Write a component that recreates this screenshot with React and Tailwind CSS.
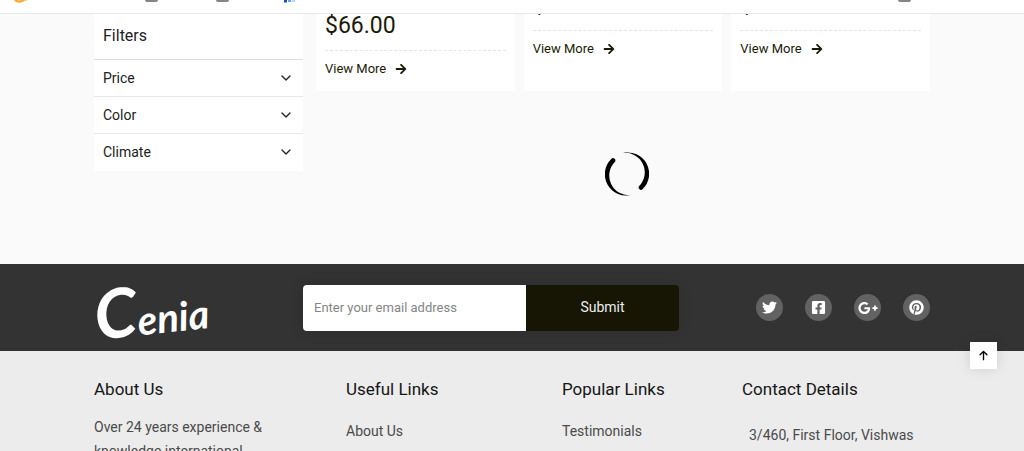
import { FaArrowRight, FaTwitter, FaFacebookSquare, FaPinterest } from "react-icons/fa";
import { FaArrowUp, FaGooglePlusG } from "react-icons/fa6";
import { FiChevronDown } from "react-icons/fi";

const filters = ["Price", "Color", "Climate"];

const products = [
  { price: "$66.00", pad: "pb-3" },
  { price: "$56.00", pad: "pb-8" },
  { price: "$44.00", pad: "pb-8" },
];

const socials = [
  { name: "Twitter", Icon: FaTwitter },
  { name: "Facebook", Icon: FaFacebookSquare },
  { name: "Google Plus", Icon: FaGooglePlusG },
  { name: "Pinterest", Icon: FaPinterest },
];

function Folder() {
  return <span className="h-[2px] w-[13px] rounded-b-xs bg-[#858585]" />;
}

function BookmarksBar() {
  return (
    <header className="relative z-10 flex h-[14px] items-start border-b border-[#e8e8e8] bg-white">
      <div className="flex flex-1 items-start">
        <svg className="ml-[14px] h-[3px] w-[13px]" viewBox="0 0 13 3">
          <path d="M1 0Q5 3 10 0" fill="none" stroke="#f9ab35" strokeWidth="2.5" />
          <path d="M10 0h3v1h-3z" fill="#fbc987" />
        </svg>
        <div className="ml-[118px] flex gap-[58px]">
          <Folder />
          <Folder />
        </div>
        <svg className="ml-[55px] h-[3px] w-[11px]" viewBox="0 0 11 3">
          <path d="M0 0h3v2.5H0z" fill="#1a4fc0" />
          <path d="M4 0h3v2H4z" fill="#6aa5ee" />
          <path d="M8 0h3v2H8z" fill="#b9d6f8" />
        </svg>
      </div>
      <div className="mr-[113px] flex">
        <Folder />
      </div>
    </header>
  );
}

function Filters() {
  return (
    <aside className="w-[209px] shrink-0 self-start bg-white text-sm text-[#222]">
      <h2 className="flex h-[46px] items-center border-b border-[#dcdcdc] px-[9px] pb-0.5 text-base">Filters</h2>
      {filters.map((name) => (
        <button
          key={name}
          type="button"
          className="flex h-[37px] w-full items-center justify-between border-b border-[#e8e8e8] px-[9px] pb-px last:border-transparent"
        >
          {name}
          <FiChevronDown className="size-4" />
        </button>
      ))}
    </aside>
  );
}

function ProductCard({ price, pad }) {
  return (
    <article className={`flex flex-1 flex-col justify-end bg-white px-[9px] ${pad}`}>
      <p className="text-[23px] leading-6 text-[#1c1b08]">{price}</p>
      <a href="#product" className="mt-3 flex items-center gap-[9px] border-t border-dashed border-[#e4e4e4] pt-2 text-[13px] leading-5 text-[#1c1b08]">
        View More
        <FaArrowRight className="size-3" />
      </a>
    </article>
  );
}

function Spinner() {
  return (
    <svg className="size-11" viewBox="0 0 44 44" role="img" aria-label="Loading">
      <path d="M6.3 7A21.3 21.3 0 0 0 26 43A19.5 19.5 0 0 1 9.8 10A2.3 2.3 0 0 0 6.3 7Z" />
      <path d="M6.3 7A21.3 21.3 0 0 0 26 43A19.5 19.5 0 0 1 9.8 10A2.3 2.3 0 0 0 6.3 7Z" transform="rotate(180 22 22)" />
    </svg>
  );
}

function FooterColumn({ title, width, children }) {
  return (
    <section className={width}>
      <h3 className="text-[17px] leading-6 text-[#151515]">{title}</h3>
      {children}
    </section>
  );
}

export default function App() {
  return (
    <div className="h-screen overflow-hidden bg-[#fafafa] font-['Roboto',sans-serif]">
      <BookmarksBar />
      <main className="mx-auto flex h-[250px] max-w-[836px] gap-[13px]">
        <Filters />
        <div className="flex min-w-0 flex-1 flex-col">
          <div className="flex h-[77px] gap-[9px]">
            {products.map((product) => (
              <ProductCard key={product.price} {...product} />
            ))}
          </div>
          <div className="mt-[61px] flex justify-center pl-2">
            <Spinner />
          </div>
        </div>
      </main>

      <section className="bg-[#333]">
        <div className="mx-auto flex h-[87px] max-w-[836px] items-center">
          <a href="#home" className="flex w-[209px] items-baseline font-['Lato',sans-serif] text-[40px] leading-none font-bold text-white italic">
            <span className="flex -rotate-6 items-baseline">
              <span className="text-[68px]">C</span>enia
            </span>
          </a>
          <form className="flex h-[46px] w-[376px] overflow-hidden rounded-[4px] shadow-[0_0_14px_rgba(0,0,0,0.15)]">
            <input
              type="email"
              aria-label="Email address"
              placeholder="Enter your email address"
              className="w-[223px] bg-white px-[11px] text-[13px] outline-none placeholder:text-[#858585]"
            />
            <button type="button" className="flex-1 bg-[#171503] pb-0.5 text-sm text-[#eee]">Submit</button>
          </form>
          <nav aria-label="Social" className="ml-auto flex gap-[22px]">
            {socials.map(({ name, Icon }) => (
              <a key={name} href="#social" aria-label={name} className="flex size-[27px] items-center justify-center rounded-full bg-[#626262] text-white">
                <Icon className={name === "Google Plus" ? "size-5" : "size-[15px]"} />
              </a>
            ))}
          </nav>
        </div>
      </section>

      <footer className="min-h-[100px] bg-[#ececec] pt-[26px] text-sm text-[#4a4a4a]">
        <div className="mx-auto flex max-w-[836px]">
          <FooterColumn title="About Us" width="w-[252px]">
            <p className="mt-[14px] w-[180px] leading-6">Over 24 years experience &amp; knowledge international</p>
          </FooterColumn>
          <FooterColumn title="Useful Links" width="w-[216px]">
            <a href="#about" className="mt-[18px] block leading-6">About Us</a>
          </FooterColumn>
          <FooterColumn title="Popular Links" width="w-[180px]">
            <a href="#testimonials" className="mt-[18px] block leading-6">Testimonials</a>
          </FooterColumn>
          <FooterColumn title="Contact Details" width="flex-1">
            <p className="mt-[22px] pl-[7px] leading-6">3/460, First Floor, Vishwas</p>
          </FooterColumn>
        </div>
      </footer>

      <button
        type="button"
        aria-label="Back to top"
        className="fixed right-[27px] bottom-[82px] flex size-[27px] items-center justify-center bg-white text-black shadow-[0_0_14px_rgba(0,0,0,0.12)]"
      >
        <FaArrowUp className="size-[11px]" />
      </button>
    </div>
  );
}
